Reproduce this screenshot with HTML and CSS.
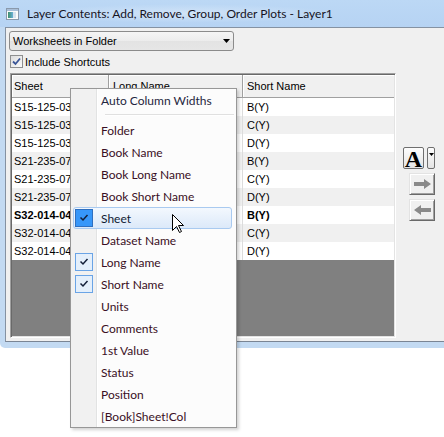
FILE: index.html
```html
<!DOCTYPE html>
<html>
<head>
<meta charset="utf-8">
<link rel="stylesheet" href="styles.css">
</head>
<body>
<div class="window">
  <div class="titlebar">
    <svg class="appicon" width="13" height="12" viewBox="0 0 13 12">
      <defs>
        <linearGradient id="ig" x1="0" y1="0" x2="1" y2="0">
          <stop offset="0" stop-color="#3f8f6c"/>
          <stop offset="1" stop-color="#6ab0d8"/>
        </linearGradient>
      </defs>
      <rect x="0.5" y="0.5" width="12" height="11" fill="#fbfbfb" stroke="#8a99ab"/>
      <rect x="1" y="1" width="11" height="2" fill="#a9bfd8"/>
      <rect x="2" y="4" width="5" height="6" fill="url(#ig)"/>
      <rect x="7" y="4" width="3" height="6" fill="#d7e3ee"/>
    </svg>
    <span class="title">Layer Contents: Add, Remove, Group, Order Plots - Layer1</span>
  </div>
  <div class="client">
    <div class="combo">
      <span class="combo-text">Worksheets in Folder</span>
      <svg class="combo-arrow" width="7" height="4" viewBox="0 0 7 4"><polygon points="0,0 7,0 3.5,4" fill="#000"/></svg>
    </div>
    <div class="chkrow">
      <span class="chkbox"><svg width="11" height="11" viewBox="0 0 11 11"><path d="M2 5.5 L4.5 8 L9 2.5" fill="none" stroke="#3a5597" stroke-width="1.8"/></svg></span>
      <span>Include Shortcuts</span>
    </div>
    <div class="main">
      <div class="list">
        <div class="hdr">
          <div class="c1">Sheet</div><div class="c2">Long Name</div><div class="c3">Short Name</div>
        </div>
        <div class="row"><div class="c1">S15-125-03</div><div class="c2"></div><div class="c3">B(Y)</div></div>
        <div class="row alt"><div class="c1">S15-125-03</div><div class="c2"></div><div class="c3">C(Y)</div></div>
        <div class="row"><div class="c1">S15-125-03</div><div class="c2"></div><div class="c3">D(Y)</div></div>
        <div class="row alt"><div class="c1">S21-235-07</div><div class="c2"></div><div class="c3">B(Y)</div></div>
        <div class="row"><div class="c1">S21-235-07</div><div class="c2"></div><div class="c3">C(Y)</div></div>
        <div class="row alt"><div class="c1">S21-235-07</div><div class="c2"></div><div class="c3">D(Y)</div></div>
        <div class="row bold"><div class="c1">S32-014-04</div><div class="c2"></div><div class="c3">B(Y)</div></div>
        <div class="row alt"><div class="c1">S32-014-04</div><div class="c2"></div><div class="c3">C(Y)</div></div>
        <div class="row"><div class="c1">S32-014-04</div><div class="c2"></div><div class="c3">D(Y)</div></div>
      </div>
      <div class="tools">
        <div class="toolrow">
          <div class="abtn">A</div>
          <div class="ddbtn"><svg width="5" height="3" viewBox="0 0 5 3"><polygon points="0,0 5,0 2.5,3" fill="#000"/></svg></div>
        </div>
        <div class="arrbtn"><svg width="17" height="10" viewBox="0 0 17 10"><polygon points="0,3 10,3 10,0 17,5 10,10 10,7 0,7" fill="#8a8a8a"/></svg></div>
        <div class="arrbtn"><svg width="17" height="10" viewBox="0 0 17 10"><polygon points="17,3 7,3 7,0 0,5 7,10 7,7 17,7" fill="#8a8a8a"/></svg></div>
      </div>
    </div>
  </div>
</div>

<div class="menu">
  <div class="mi first">Auto Column Widths</div>
  <div class="sep"></div>
  <div class="mi">Folder</div>
  <div class="mi">Book Name</div>
  <div class="mi">Book Long Name</div>
  <div class="mi">Book Short Name</div>
  <div class="mi hot"><span class="mchk on"><svg width="18" height="18" viewBox="0 0 18 18"><path d="M5.5 8.5 L8 11 L12.5 6" fill="none" stroke="#14203a" stroke-width="1.5"/></svg></span>Sheet</div>
  <div class="mi">Dataset Name</div>
  <div class="mi"><span class="mchk"><svg width="18" height="18" viewBox="0 0 18 18"><path d="M5.5 8.5 L8 11 L12.5 6" fill="none" stroke="#14203a" stroke-width="1.5"/></svg></span>Long Name</div>
  <div class="mi"><span class="mchk"><svg width="18" height="18" viewBox="0 0 18 18"><path d="M5.5 8.5 L8 11 L12.5 6" fill="none" stroke="#14203a" stroke-width="1.5"/></svg></span>Short Name</div>
  <div class="mi">Units</div>
  <div class="mi">Comments</div>
  <div class="mi">1st Value</div>
  <div class="mi">Status</div>
  <div class="mi">Position</div>
  <div class="mi">[Book]Sheet!Col</div>
</div>

<svg class="cursor" width="13" height="20" viewBox="0 0 13 20">
  <polygon points="0.5,0.5 0.5,16.5 4.5,12.5 7.5,18.5 9.5,17.5 6.5,11.5 11.5,11.5" fill="#fff" stroke="#000" stroke-width="1" stroke-linejoin="miter"/>
</svg>
</body>
</html>
```

FILE: styles.css
```css
* { box-sizing: border-box; }

html, body {
  margin: 0;
  padding: 0;
  width: 444px;
  height: 437px;
  overflow: hidden;
  background: #ffffff;
  font-family: "Liberation Sans", Arial, sans-serif;
  font-size: 11px;
  color: #000;
}

.window {
  width: 444px;
  background: #c3daf2;
  padding-bottom: 6px;
  border-bottom-left-radius: 5px;
}

.titlebar {
  height: 27px;
  display: flex;
  align-items: center;
  background: linear-gradient(#bcd8f5, #b6d3f3);
  padding-left: 6px;
}

.appicon {
  flex: none;
}

.title {
  margin-left: 8px;
  font-family: Lato, "Noto Sans", sans-serif;
  font-size: 12px;
  color: #16141f;
  padding: 2px 8px 2px 0;
  white-space: nowrap;
  background: radial-gradient(ellipse at center, rgba(255,255,255,0.35), rgba(255,255,255,0) 70%);
}

.client {
  margin-left: 5px;
  height: 315px;
  background: #f0f0f0;
  border-top: 1px solid #8592a2;
  border-left: 1px solid #8592a2;
  border-bottom: 1px solid #7a8594;
  padding-top: 3px;
  display: flex;
  flex-direction: column;
}

.combo {
  margin-left: 3px;
  width: 225px;
  height: 20px;
  border: 1px solid #8b8b8b;
  border-radius: 3px;
  background: linear-gradient(#f5f5f5, #ececec 50%, #e3e3e3 51%, #e6e6e6);
  display: flex;
  align-items: center;
  padding-left: 3px;
  padding-right: 3px;
}

.combo-text { flex: 1; }

.combo-arrow { flex: none; }

.chkrow {
  margin-top: 4px;
  margin-left: 4px;
  height: 13px;
  display: flex;
  align-items: center;
  gap: 2px;
}

.chkbox {
  width: 13px;
  height: 13px;
  border: 1px solid #8e8f8f;
  background: linear-gradient(135deg, #dcdcdc, #fbfbfb);
  display: flex;
  align-items: center;
  justify-content: center;
}

.main {
  margin-top: 5px;
  display: flex;
  align-items: flex-start;
}

.list {
  flex: none;
  margin-left: 4px;
  width: 386px;
  height: 265px;
  background: #808080;
  border: 1px solid;
  border-color: #a0a0a0 #ffffff #ffffff #a0a0a0;
  box-shadow: inset 1px 1px #696969, inset -1px -1px #e3e3e3;
  padding: 1px;
}

.hdr {
  height: 23px;
  display: flex;
  background: #f0f0f0;
  border-bottom: 1px solid #a0a0a0;
}

.hdr > div {
  display: flex;
  align-items: center;
  border-right: 1px solid #a0a0a0;
  box-shadow: inset 1px 1px #ffffff;
}

.c1 { width: 97px; padding-left: 2px; }
.c2 { width: 134px; padding-left: 4px; }
.c3 { width: 151px; padding-left: 4px; }

.hdr .c3 { border-right: none; }

.row {
  height: 18px;
  display: flex;
  background: #ffffff;
}

.row.alt { background: #f0f0f0; }
.row.bold { font-weight: bold; }

.row > div {
  display: flex;
  align-items: center;
  border-right: 1px solid #dcdcdc;
  white-space: nowrap;
  overflow: hidden;
}

.row .c3 { border-right: none; }

.tools {
  flex: none;
  margin-left: 7px;
  margin-top: 74px;
  display: flex;
  flex-direction: column;
  align-items: flex-end;
}

.toolrow {
  display: flex;
  gap: 3px;
}

.abtn {
  width: 21px;
  height: 22px;
  border: 1px solid #6f6f6f;
  border-radius: 2px;
  background: linear-gradient(#fdfdfd, #e4e4e4);
  font-family: "Liberation Serif", "Times New Roman", serif;
  font-weight: bold;
  font-size: 24px;
  line-height: 22px;
  text-align: center;
  overflow: visible;
}

.ddbtn {
  width: 8px;
  height: 22px;
  border: 1px solid #6f6f6f;
  border-radius: 2px;
  background: linear-gradient(#fdfdfd, #e4e4e4);
  display: flex;
  justify-content: center;
  padding-top: 5px;
}

.ddbtn svg { display: block; }

.arrbtn {
  margin-top: 4px;
  width: 26px;
  height: 22px;
  background: #f0f0f0;
  border: 1px solid;
  border-color: #e3e3e3 #696969 #696969 #e3e3e3;
  box-shadow: inset 1px 1px #ffffff, inset -1px -1px #a0a0a0;
  display: flex;
  align-items: center;
  justify-content: center;
}

.menu {
  position: absolute;
  left: 70px;
  top: 88px;
  width: 167px;
  height: 340px;
  border: 1px solid #979797;
  background: linear-gradient(to right, #f1f1f1 0, #f1f1f1 25px, #e2e3e3 25px, #e2e3e3 26px, #ffffff 26px, #ffffff 27px, #fcfcfc 27px);
  box-shadow: 2px 2px 3px rgba(0,0,0,0.18);
  display: flex;
  flex-direction: column;
  font-family: Lato, "Noto Sans", sans-serif;
  font-size: 12px;
  color: #3a0f24;
}

.mi {
  position: relative;
  height: 22px;
  flex: none;
  display: flex;
  align-items: center;
  padding-left: 30px;
}

.mi.first { color: #1f2640; }

.mi.hot {
  color: #101a33;
  z-index: 0;
}

.mi.hot::before {
  content: "";
  position: absolute;
  z-index: -1;
  left: 2px;
  right: 4px;
  top: 0;
  bottom: 0;
  border: 1px solid #a9caf0;
  border-radius: 3px;
  background: linear-gradient(#f3f8fe, #dce9f9);
}

.mchk {
  position: absolute;
  left: 4px;
  top: 2px;
  width: 18px;
  height: 18px;
  border: 1px solid #6aa4e6;
  background: #e4effb;
  display: block;
}

.mchk svg {
  position: absolute;
  left: -1px;
  top: -1px;
}

.mchk.on {
  background: #3797f9;
  border-color: #2f6fbf;
}

.sep {
  flex: none;
  height: 8px;
  position: relative;
}

.sep::after {
  content: "";
  position: absolute;
  left: 34px;
  right: 2px;
  top: 3px;
  height: 1px;
  background: #e0e0e0;
  border-bottom: 1px solid #ffffff;
  box-sizing: content-box;
}

.cursor {
  position: absolute;
  left: 172px;
  top: 214px;
}
```
